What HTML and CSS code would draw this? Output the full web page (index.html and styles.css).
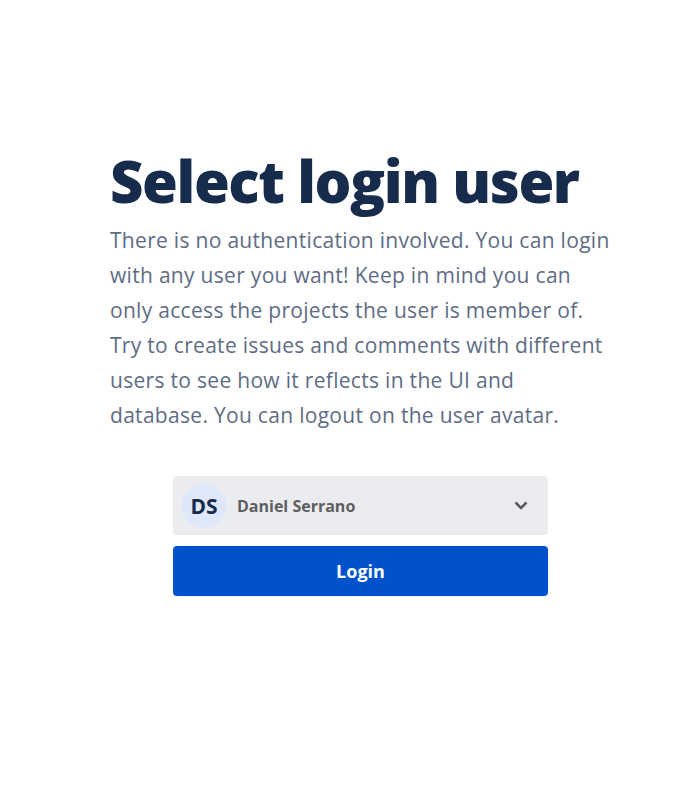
FILE: index.html
```html
<!DOCTYPE html>
<html>
<head>
<meta charset="utf-8">
<link rel="stylesheet" href="styles.css">
</head>
<body>
<main class="page">
  <section class="intro">
    <h1 class="title">Select login user</h1>
    <p class="desc">There is no authentication involved. You can login<br>with any user you want! Keep in mind you can<br>only access the projects the user is member of.<br>Try to create issues and comments with different<br>users to see how it reflects in the UI and<br>database. You can logout on the user avatar.</p>
  </section>
  <form class="form">
    <div class="select">
      <span class="avatar">DS</span>
      <span class="name">Daniel Serrano</span>
      <svg class="chevron" width="14" height="9" viewBox="0 0 14 9"><path d="M1.5 1.5 L7 7 L12.5 1.5" fill="none" stroke="#5a5a5a" stroke-width="2.6"/></svg>
    </div>
    <button class="btn" type="button">Login</button>
  </form>
</main>
</body>
</html>
```
FILE: styles.css
```css
html, body { margin: 0; padding: 0; background: #fff; }
body { font-family: "Open Sans", "Noto Sans", sans-serif; }
.page {
  padding: 145px 0 0 110px;
  width: 540px;
  display: flex;
  flex-direction: column;
}
.title {
  margin: 0;
  font-size: 58px;
  font-weight: 800;
  color: #172b4d;
  line-height: 72px;
  letter-spacing: -1.4px;
}
.desc {
  margin: 6px 0 0 0;
  font-size: 21px;
  line-height: 35px;
  letter-spacing: 0.3px;
  color: #5e6c84;
  white-space: nowrap;
}
.form {
  margin: 43px 0 0 63px;
  width: 375px;
  display: flex;
  flex-direction: column;
  gap: 11px;
}
.select {
  height: 59px;
  background: #ebecf0;
  border-radius: 4px;
  display: flex;
  align-items: center;
  padding: 0 20px 0 9px;
  box-sizing: border-box;
}
.avatar {
  width: 44px;
  height: 44px;
  border-radius: 50%;
  background: #dfe7fb;
  color: #172b4d;
  font-weight: 700;
  font-size: 21px;
  display: flex;
  align-items: center;
  justify-content: center;
}
.name {
  margin-left: 11px;
  font-size: 16px;
  font-weight: 700;
  color: #5e5e5e;
  flex: 1;
}
.btn {
  height: 50px;
  border: 0;
  border-radius: 4px;
  background: #0052cc;
  color: #fff;
  font-family: inherit;
  font-size: 18px;
  font-weight: 700;
}
```
